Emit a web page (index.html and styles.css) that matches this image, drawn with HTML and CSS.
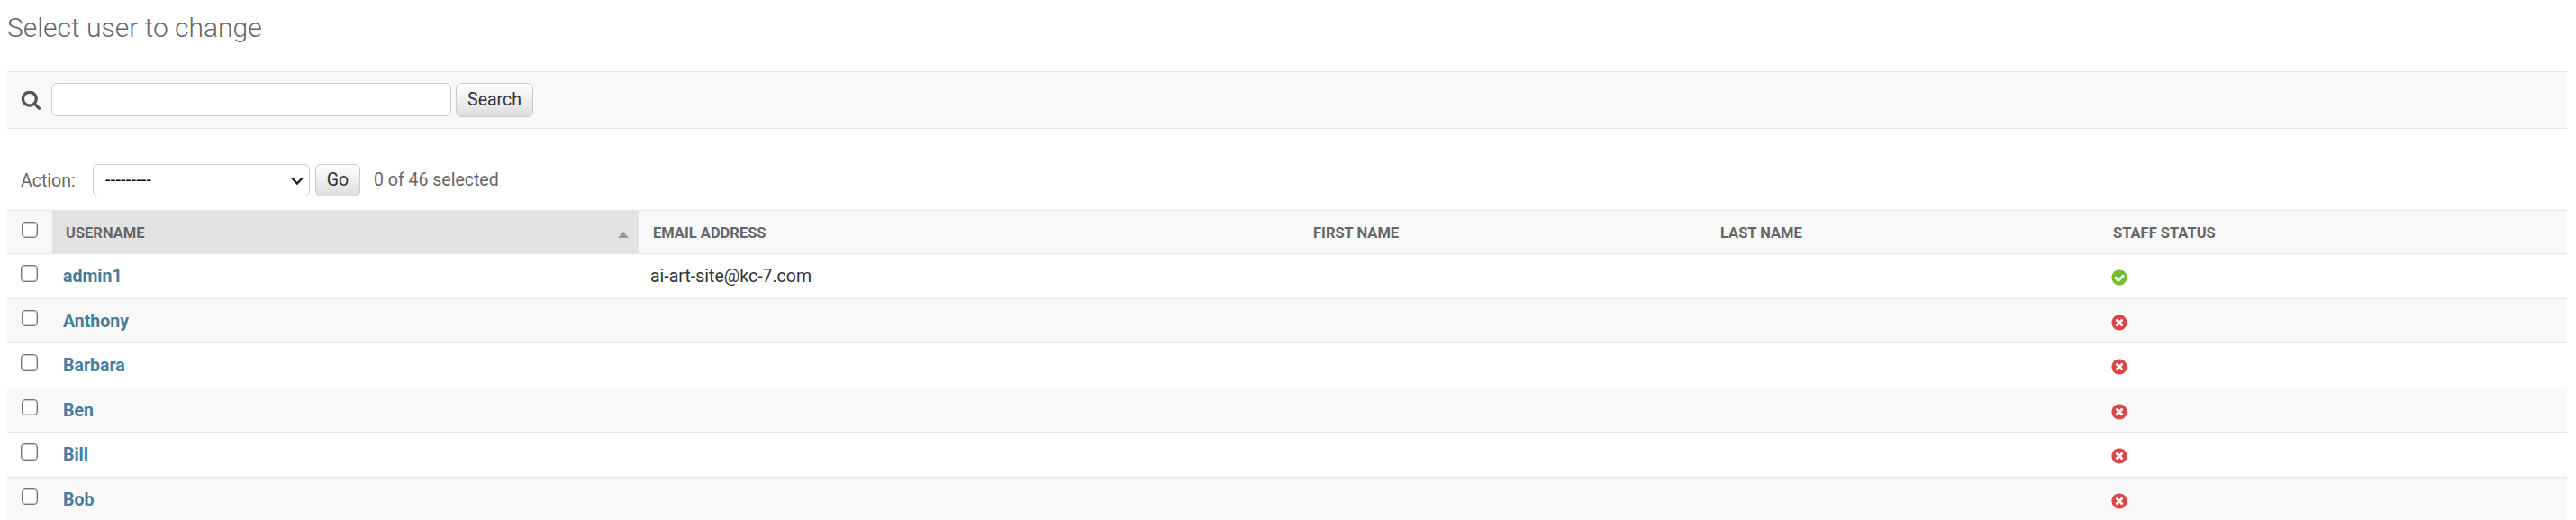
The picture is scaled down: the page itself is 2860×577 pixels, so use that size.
FILE: index.html
```html
<!DOCTYPE html>
<html lang="en">
<head>
<meta charset="utf-8">
<title>Select user to change</title>
<link rel="stylesheet" href="styles.css">
</head>
<body>
<svg class="defs" aria-hidden="true">
  <symbol id="yes" viewBox="0 0 1792 1792"><path fill="#70bf2b" d="M1412 734q0-28-18-46l-91-90q-19-19-45-19t-45 19l-408 407-226-226q-19-19-45-19t-45 19l-91 90q-18 18-18 46 0 27 18 45l362 362q19 19 45 19 27 0 46-19l543-543q18-18 18-45zm252 162q0 209-103 385.500t-279.500 279.500-385.500 103-385.500-103-279.500-279.500-103-385.500 103-385.500 279.500-279.500 385.500-103 385.500 103 279.500 279.500 103 385.500z"/></symbol>
  <symbol id="no" viewBox="0 0 1792 1792"><path fill="#dd4646" d="M1277 1122q0-26-19-45l-181-181 181-181q19-19 19-45 0-27-19-46l-90-90q-19-19-46-19-26 0-45 19l-181 181-181-181q-19-19-45-19-27 0-46 19l-90 90q-19 19-19 46 0 26 19 45l181 181-181 181q-19 19-19 45 0 27 19 46l90 90q19 19 46 19 26 0 45-19l181-181 181 181q19 19 45 19 27 0 46-19l90-90q19-19 19-46zm387-226q0 209-103 385.500t-279.500 279.500-385.500 103-385.500-103-279.500-279.500-103-385.500 103-385.500 279.500-279.500 385.500-103 385.500 103 279.500 279.500 103 385.500z"/></symbol>
</svg>
<main class="content">
  <h1 class="title">Select user to change</h1>
  <form class="toolbar">
    <svg class="search-icon" viewBox="0 0 1792 1792"><path fill="#555" d="M1216 832q0-185-131.500-316.500t-316.500-131.500-316.500 131.500-131.500 316.500 131.500 316.500 316.500 131.500 316.500-131.500 131.500-316.500zm512 832q0 52-38 90t-90 38q-54 0-90-38l-343-342q-179 124-399 124-143 0-273.500-55.500t-225-150-150-225-55.500-273.500 55.500-273.500 150-225 225-150 273.500-55.500 273.500 55.500 225 150 150 225 55.500 273.500q0 220-124 399l343 343q37 37 37 90z"/></svg>
    <input class="search-input" type="text" aria-label="Search">
    <button class="button search-button" type="button">Search</button>
  </form>
  <div class="actions">
    <span class="label">Action:</span>
    <div class="select"><span class="select-value">---------</span>
      <svg class="chevron" viewBox="0 0 14 10"><path d="M1.200 1.500 7 7.500 12.800 1.500" fill="none" stroke="#222" stroke-width="2.400"/></svg>
    </div>
    <button class="button go-button" type="button">Go</button>
    <span class="counter">0 of 46 selected</span>
  </div>
  <table class="results">
    <colgroup><col class="c-check"><col class="c-user"><col class="c-email"><col class="c-first"><col class="c-last"><col></colgroup>
    <thead><tr><th><input class="check" type="checkbox"></th><th class="sorted"><div class="sort-head">Username<span class="arrow"></span></div></th><th>Email address</th><th>First name</th><th>Last name</th><th>Staff status</th></tr></thead>
    <tbody>
      <tr><td><input class="check" type="checkbox"></td><td class="name">admin1</td><td>ai-art-site@kc-7.com</td><td></td><td></td><td><svg class="status"><use href="#yes"/></svg></td></tr>
      <tr><td><input class="check" type="checkbox"></td><td class="name">Anthony</td><td></td><td></td><td></td><td><svg class="status"><use href="#no"/></svg></td></tr>
      <tr><td><input class="check" type="checkbox"></td><td class="name">Barbara</td><td></td><td></td><td></td><td><svg class="status"><use href="#no"/></svg></td></tr>
      <tr><td><input class="check" type="checkbox"></td><td class="name">Ben</td><td></td><td></td><td></td><td><svg class="status"><use href="#no"/></svg></td></tr>
      <tr><td><input class="check" type="checkbox"></td><td class="name">Bill</td><td></td><td></td><td></td><td><svg class="status"><use href="#no"/></svg></td></tr>
      <tr><td><input class="check" type="checkbox"></td><td class="name">Bob</td><td></td><td></td><td></td><td><svg class="status"><use href="#no"/></svg></td></tr>
    </tbody>
  </table>
</main>
</body>
</html>
```
FILE: styles.css
```css
* { box-sizing: border-box; }
html { overflow: hidden; }
body {
  margin: 0;
  height: 577px;
  overflow: hidden;
  background: #fff;
  color: #333;
  font: 19.5px/24px Roboto, "Liberation Sans", sans-serif;
}
.defs { display: none; }
.content { width: 2842px; margin-left: 8px; }
.title {
  margin: 0;
  height: 79px;
  padding-top: 13px;
  font-size: 30px;
  line-height: 36px;
  font-weight: 300;
  color: #666;
}
.toolbar {
  display: flex;
  height: 64px;
  padding: 12px 0 0 15px;
  border: solid #e6e6e6;
  border-width: 1px 0;
  background: #f8f8f8;
}
.search-icon { width: 23px; height: 23px; margin: 7px 11px 0 0; }
.search-input {
  width: 444px;
  height: 37px;
  margin: 0 5px 0 0;
  border: 1px solid #ccc;
  border-radius: 6px;
  background: #fff;
}
.button {
  padding: 0;
  border: 1px solid #ccc;
  border-radius: 6px;
  background: linear-gradient(#fff, #ddd);
  color: #333;
  font: inherit;
}
.search-button { width: 86px; height: 38px; }
.actions { display: flex; height: 90px; padding: 39px 0 0 15px; color: #666; }
.label { width: 80px; padding-top: 7px; }
.select {
  display: flex;
  justify-content: space-between;
  width: 241px;
  height: 36px;
  margin-right: 6px;
  padding: 5px 6px 0 13px;
  border: 1px solid #ccc;
  border-radius: 6px;
  color: #000;
}
.select-value { letter-spacing: 0.3px; }
.chevron { width: 14px; height: 10px; margin-top: 8px; }
.go-button { width: 50px; height: 36px; }
.counter { padding: 6px 0 0 15px; }
.results { width: 2842px; border-collapse: separate; border-spacing: 0; table-layout: fixed; }
.c-check { width: 50px; }
.c-user { width: 652px; }
.c-email { width: 733px; }
.c-first { width: 452px; }
.c-last { width: 436px; }
.results th, .results td {
  padding: 0 0 0 12px;
  border-bottom: 1px solid #e6e6e6;
  text-align: left;
  vertical-align: top;
}
.results th {
  height: 49px;
  padding: 13px 0 0 15px;
  border-top: 1px solid #e6e6e6;
  background: #f8f8f8;
  color: #666;
  font-size: 16.5px;
  line-height: 24px;
  font-weight: 700;
  text-transform: uppercase;
}
.results td { height: 50px; padding-top: 13px; }
.results tbody tr:nth-child(even) td { height: 49px; background: #f8f8f8; }
.results .sorted { background: #e3e3e3; }
.sort-head { display: flex; justify-content: space-between; }
.arrow {
  width: 0;
  height: 0;
  margin: 10px 12px 0 0;
  border: solid transparent;
  border-width: 0 6.5px 7px;
  border-bottom-color: #999;
}
.results .name { color: #447e9b; font-weight: 700; }
.check {
  appearance: none;
  display: block;
  width: 18px;
  height: 18px;
  margin: 0;
  border: 1px solid #767676;
  border-radius: 4px;
  background: #fff;
  box-shadow: inset 0 0 0 1px rgba(118, 118, 118, 0.4);
}
.results th:first-child { padding: 12px 0 0 16px; }
.results td:first-child { padding: 12px 0 0 16px; }
.results tbody tr:nth-child(odd) td:first-child { padding-left: 15px; }
.results tbody tr:nth-child(odd) .check { width: 19px; height: 19px; }
.status { display: block; width: 20px; height: 20px; margin: 3px 0 0; }
```
